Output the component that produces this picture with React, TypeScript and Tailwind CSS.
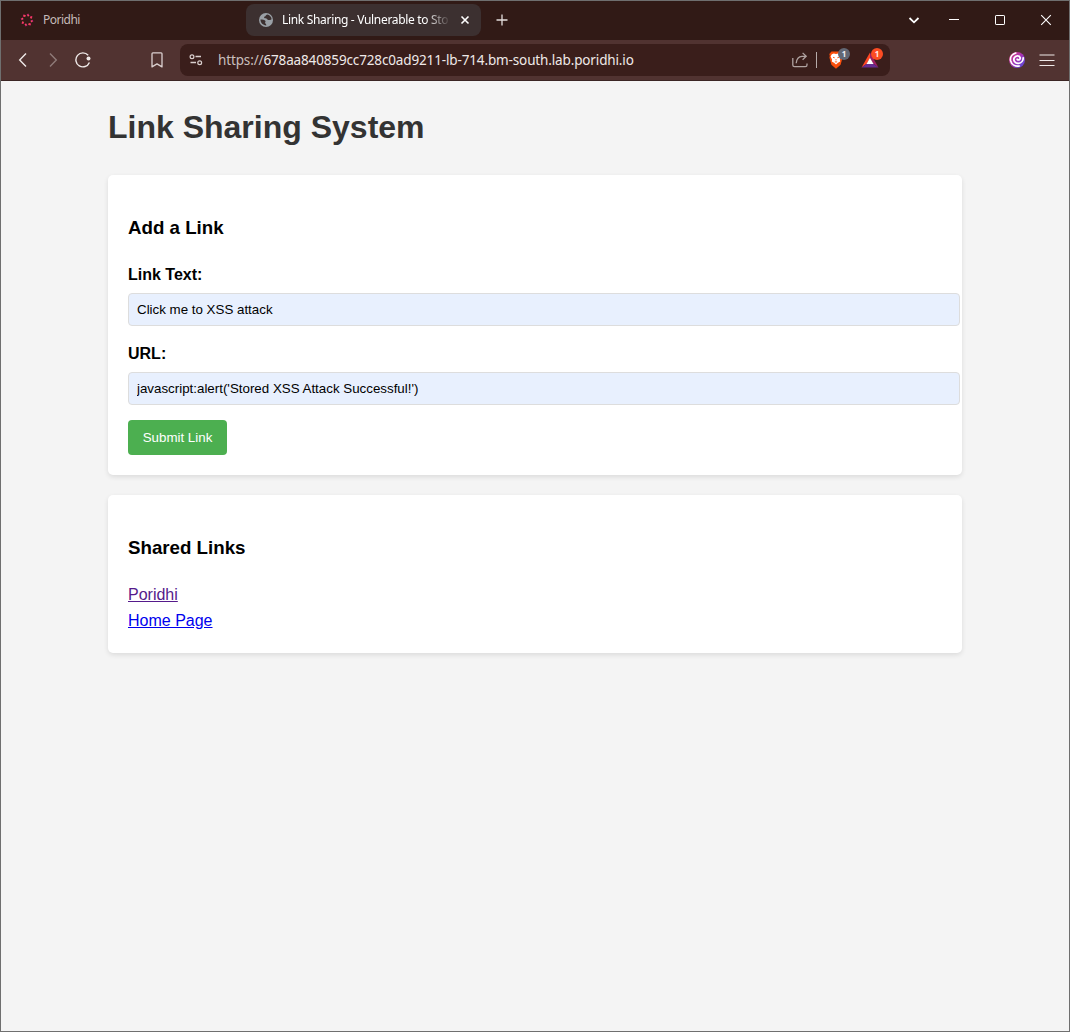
import type { ReactNode } from "react";

function Icon({ size = 16, className = "", children }: { size?: number; className?: string; children: ReactNode }) {
  return (
    <svg
      width={size}
      height={size}
      viewBox={`0 0 ${size} ${size}`}
      fill="none"
      stroke="currentColor"
      className={`shrink-0 ${className}`}
    >
      {children}
    </svg>
  );
}

const dashes = [0, 45, 90, 135, 180, 225, 270, 315];

function PoridhiIcon() {
  return (
    <Icon size={14}>
      {dashes.map((a, i) => (
        <g key={a} transform={`rotate(${a + 14} 7 7)`}>
          <path d="M6 1.200L7.600 2.700" strokeWidth="1.900" stroke={i % 2 ? "#f0286c" : "#d3247c"} />
          <path d="M7 2.100L7.700 2.800" strokeWidth="1.400" stroke="#f4614f" />
        </g>
      ))}
    </Icon>
  );
}

function GlobeIcon() {
  return (
    <Icon size={14}>
      <circle cx="7" cy="7" r="7" fill="#9aa0a6" stroke="none" />
      <path
        d="M8.2 1.6C6.6 2 6.9 3.4 5.8 3.6 4.700 3.800 4.900 4.900 5.700 5.300 6.600 5.700 8 5.200 8.300 6.300 8.500 7 9.500 7 10.300 7.100 11.400 7.200 11.900 6.600 12.600 6.300 12.500 4 10.700 2 8.200 1.600Z"
        fill="#3c3030"
        stroke="none"
      />
      <path
        d="M1.500 6.600C3.300 6.600 5.800 6.700 6.500 8.100 6.800 9 5.800 9.300 6.200 10.200 6.500 10.800 7.300 10.800 7.300 12.400 4 12.500 1.400 10 1.500 6.600Z"
        fill="#3c3030"
        stroke="none"
      />
    </Icon>
  );
}

function BraveIcon() {
  return (
    <svg width="16" height="18" viewBox="0 0 16 18" className="shrink-0">
      <path d="M3.500 0.500h9l2.200 2.500-.5 2 .4 1.500-2 7.300L8 17.800l-4.600-4L1.400 6.500l.4-1.500-.5-2z" fill="#fb4e0b" />
      <path
        d="M8 3l2.200-.5 2 .7 1.200 2.400-1.500 3.200.3 1.700-2.200 1.300L8 13.600l-2-1.800-2.200-1.300.3-1.700L2.600 5.600l1.200-2.400 2-.7z"
        fill="#fff"
      />
      <path
        d="M5 6.300l1.700.5M11 6.300l-1.700.5M7.400 8.800h1.200M6.800 10.900h2.400"
        fill="none"
        stroke="#fb4e0b"
        strokeWidth=".9"
      />
    </svg>
  );
}

function RewardsIcon() {
  return (
    <svg width="18" height="16" viewBox="0 0 18 16" className="shrink-0">
      <path d="M9 0.500L0.500 15.500 6 11.500 9 6z" fill="#ff4724" />
      <path d="M9 0.500L17.500 15.500 12 11.500 9 6z" fill="#9e1f63" />
      <path d="M0.500 15.500H17.500L12 11.500H6z" fill="#662d91" />
      <path d="M9 5.800l3.500 6.200H5.500z" fill="#fff" />
    </svg>
  );
}

function SwirlIcon() {
  return (
    <svg width="16" height="16" viewBox="0 0 16 16" className="shrink-0">
      <defs>
        <linearGradient id="swirl" x1="0" y1="0" x2="1" y2="1">
          <stop offset="0.100" stopColor="#d8367f" />
          <stop offset="0.500" stopColor="#a336b8" />
          <stop offset="1" stopColor="#4a4de0" />
        </linearGradient>
      </defs>
      <circle cx="8" cy="8" r="8" fill="url(#swirl)" />
      <g fill="none" stroke="#fff" strokeLinecap="round">
        <path
          d="M8.200 7.300C9.500 8.600 11.600 7.500 11.100 5.600 10.300 3.200 6.600 3.200 5.200 5.900 4 8.800 6.300 11.500 9.400 11.300 12.300 11.100 14.300 8.600 14.200 5.800"
          strokeWidth="1.800"
        />
        <path d="M6.800 1C3 2.200.9 5.300 1.600 8.700 2.700 12.600 6.300 14.800 10.300 14" strokeWidth="1.700" />
      </g>
    </svg>
  );
}

function Badge({ className }: { className: string }) {
  return (
    <span
      className={`absolute left-[10px] flex h-3 w-3 items-center justify-center rounded-full text-[8px] font-bold leading-none text-white/90 ${className}`}
    >
      1
    </span>
  );
}

function TabStrip() {
  return (
    <div className="flex h-[39px] items-center bg-[#311a16] pb-px text-[12px]">
      <div className="flex h-8 w-[225px] items-center pl-[19px] text-[#c5bbb9]">
        <PoridhiIcon />
        <span className="ml-[9px] tracking-[-0.500px]">Poridhi</span>
      </div>
      <div className="ml-5 flex h-8 w-[235px] shrink-0 items-center rounded-lg bg-[#3c3030] pl-[13px] text-white">
        <GlobeIcon />
        <span className="ml-[9px] w-[167px] whitespace-nowrap tracking-[-0.320px] [mask-image:linear-gradient(to_right,black_143px,transparent_169px)]">
          Link Sharing - Vulnerable to Sto
        </span>
        <Icon size={10} className="ml-[11px]">
          <path d="M1.500 1.500l7 7M8.500 1.500l-7 7" strokeWidth="1.600" />
        </Icon>
      </div>
      <Icon size={12} className="ml-[15px] text-[#e4dedd]">
        <path d="M6 .5v11M.5 6h11" strokeWidth="1.300" />
      </Icon>
      <div className="ml-auto flex items-center text-white">
        <Icon size={12}>
          <path d="M1.500 4L6 8.300 10.500 4" strokeWidth="1.800" />
        </Icon>
        <Icon size={10} className="ml-[29px]">
          <path d="M0 4.500h10" />
        </Icon>
        <Icon size={10} className="ml-9">
          <rect x=".5" y=".5" width="9" height="9" rx=".6" />
        </Icon>
        <Icon size={12} className="ml-[35px] mr-[17px]">
          <path d="M1.200 1.200l9.600 9.600M10.800 1.200l-9.600 9.600" strokeWidth="1.100" />
        </Icon>
      </div>
    </div>
  );
}

function Toolbar() {
  return (
    <div className="flex h-[41px] items-center border-b border-[#3b2524] bg-[#513331] text-[#efe9e8]">
      <Icon className="ml-[14px]">
        <path d="M11 1.500L4.700 8 11 14.500" strokeWidth="1.400" />
      </Icon>
      <Icon className="ml-[14px] text-[#8f7b79]">
        <path d="M5 1.500L11.300 8 5 14.500" strokeWidth="1.400" />
      </Icon>
      <Icon className="ml-[14px]">
        <path d="M13.200 3.300A7 7 0 1 0 14.400 10.500" strokeWidth="1.400" />
        <circle cx="13.500" cy="6.500" r="2" fill="currentColor" stroke="none" />
      </Icon>
      <Icon className="ml-[58px] text-[#dbd0cf]">
        <path d="M3.900.8h8.200q.9 0 .9.900v13.200L8 11.900 3 14.900V1.700q0-.9.9-.9z" strokeWidth="1.300" strokeLinejoin="round" />
      </Icon>
      <div className="ml-[15px] flex h-8 w-[710px] items-center rounded-lg bg-[#3a1e1b]">
        <Icon size={14} className="ml-[9px] text-[#dacfce]">
          <circle cx="3" cy="3.700" r="1.900" strokeWidth="1.200" />
          <path d="M6.500 3.500H12M1.500 9.500H7" strokeWidth="1.300" />
          <circle cx="10.700" cy="9.700" r="1.900" strokeWidth="1.200" />
        </Icon>
        <span className="ml-[15px] w-[574px] whitespace-nowrap text-[13.500px] tracking-[-0.140px]">
          <span className="text-[#c9bfbd]">https://</span>678aa840859cc728c0ad9211-lb-714.bm-south.lab.poridhi.io
        </span>
        <Icon className="text-[#b0a3a1]">
          <path
            d="M.8 6v7q0 1.700 1.700 1.700h10.800q1.700 0 1.700-1.700v-1.500M4.200 11.200C4.600 7 7 4.400 10 4.300h3.500M10.600.9l3.600 3.400-3.600 3.500"
            strokeWidth="1.300"
          />
        </Icon>
        <span className="ml-2 h-4 w-px bg-[#b6abaa]" />
        <span className="relative ml-[11px] flex">
          <BraveIcon />
          <Badge className="-top-[3px] bg-[#626774]" />
        </span>
        <span className="relative ml-[17px] flex">
          <RewardsIcon />
          <Badge className="-top-1 bg-[#fc4c23]" />
        </span>
      </div>
      <div className="ml-[119px] flex">
        <SwirlIcon />
      </div>
      <Icon className="ml-[14px]">
        <path d="M.5 3h15M.5 8.500h15M.5 13.500h15" strokeWidth="1.200" />
      </Icon>
    </div>
  );
}

function Card({ title, children }: { title: string; children: ReactNode }) {
  return (
    <section className="mb-5 rounded-[5px] bg-white p-5 shadow-[0_2px_5px_rgba(0,0,0,0.1)]">
      <h3 className="mb-[19.440px] mt-[18px] text-[18.720px] font-bold leading-[29.950px]">{title}</h3>
      {children}
    </section>
  );
}

function Field({ label, value }: { label: string; value: string }) {
  return (
    <div className="mb-[15px]">
      <label className="mb-[5px] block font-bold">{label}</label>
      <input
        readOnly
        value={value}
        className="block h-[33px] w-[832px] rounded border border-[#dddddd] bg-[#e8f0fe] px-2 text-[13.333px] text-black outline-none"
      />
    </div>
  );
}

export default function App() {
  return (
    <div className="flex h-[1032px] w-[1070px] flex-col border border-[#6f6f6f] bg-[#f4f4f4]">
      <header className="font-['Noto_Sans',sans-serif]">
        <TabStrip />
        <Toolbar />
      </header>
      <main className="ml-[107px] w-[854px] font-['Liberation_Sans',sans-serif] text-base leading-[25.600px] text-black">
        <h1 className="mb-[21.400px] mt-[21.400px] text-[32px] font-bold leading-[51.200px] text-[#333333]">
          Link Sharing System
        </h1>
        <Card title="Add a Link">
          <Field label="Link Text:" value="Click me to XSS attack" />
          <Field label="URL:" value="javascript:alert('Stored XSS Attack Successful!')" />
          <button className="block h-[35px] w-[99px] rounded bg-[#4caf50] pt-px text-[13.333px] text-white">
            Submit Link
          </button>
        </Card>
        <Card title="Shared Links">
          <ul>
            <li>
              <a className="text-[#551a8b] underline">Poridhi</a>
            </li>
            <li>
              <a className="text-[#0000ee] underline">Home Page</a>
            </li>
          </ul>
        </Card>
      </main>
    </div>
  );
}
